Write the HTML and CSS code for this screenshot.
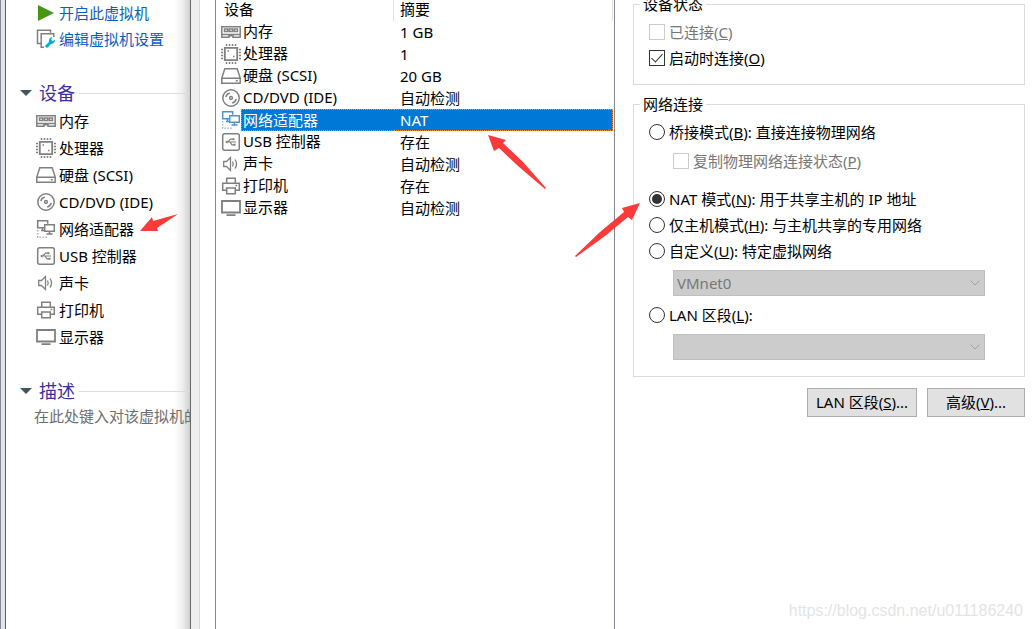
FILE: index.html
```
<!DOCTYPE html>
<html lang="zh-CN">
<head>
    <meta charset="UTF-8">
    <meta name="viewport" content="width=device-width, initial-scale=1.0">
    <title>虚拟机设置</title>
    <link rel="stylesheet" href="styles.css">
</head>
<body>
    <!-- icons -->
    <svg class="sprite">
        <symbol id="memory" viewBox="0 0 20 20">
            <path d="M.8 4.7h18.4v10.6H12v-1.5H8v1.5H.8z M.8 12.5h18.4"/>
            <path d="M3.5 7h3.2v2.5H3.5z M8.4 7h3.2v2.5H8.4z M13.3 7h3.2v2.5h-3.2z"/>
        </symbol>
        <symbol id="cpu" viewBox="0 0 20 20">
            <path d="M3.8 3.8h12.4v12.4H3.8z" stroke-width="1.8"/>
            <path d="M5.5 0v2 M8.5 0v2 M11.5 0v2 M14.5 0v2 M5.5 18v2 M8.5 18v2 M11.5 18v2 M14.5 18v2 M0 5.5h2 M0 8.5h2 M0 11.5h2 M0 14.5h2 M18 5.5h2 M18 8.5h2 M18 11.5h2 M18 14.5h2"/>
            <path d="M6.5 7H8 M12 12.5h1.5"/>
        </symbol>
        <symbol id="disk" viewBox="0 0 20 20">
            <path d="M3.8 2.7h12.4l3 9.3v5.3H.8V12z M.8 12.2h18.4 M14.8 14.8h2"/>
        </symbol>
        <symbol id="cd" viewBox="0 0 20 20">
            <circle cx="10" cy="10" r="8.2"/>
            <circle cx="10" cy="10" r="1.4"/>
            <path d="M4.8 9a5.5 5.5 0 0 1 4-4 M15.2 11a5.5 5.5 0 0 1-4 4"/>
        </symbol>
        <symbol id="network" viewBox="0 0 20 20">
            <path d="M8 8.7H1.7V1.7h10v3 M5 11.5h3.5 M6.500 8.700v2.800"/>
            <path d="M8.7 5.7h9.6v6.6H8.7z M13.5 12.3v2.4 M10.5 15h6"/>
            <path d="M1.7 11v7.3h10" stroke-dasharray="1.5 1.5" stroke-opacity=".6"/>
        </symbol>
        <symbol id="usb" viewBox="0 0 20 20">
            <rect x="1.7" y="1.7" width="16.6" height="16.6" rx="2"/>
            <path d="M5 10h10 M7 10l2.5-2.8H12 M9 10l2 2.8h2" stroke-width="1.2"/>
            <path class="solid" d="M4 10l2.5-1.7v3.4z M11.5 6.2h2v2h-2z M12.5 11.8h2v2h-2z"/>
        </symbol>
        <symbol id="sound" viewBox="0 0 20 20">
            <path d="M2.7 7.5h2.8l4-4v13l-4-4H2.7z M11.5 7.5q1.5 2.5 0 5 M14 5.5q3 4.5 0 9" stroke-width="1.3"/>
        </symbol>
        <symbol id="printer" viewBox="0 0 20 20">
            <path d="M5.7 7V2.2h8.6V7 M5 14.3H1.7V7.2h16.6v7.1H15 M5.7 12h8.6v5.8H5.7z M14.5 9.5h1.8"/>
        </symbol>
        <symbol id="display" viewBox="0 0 20 20">
            <path d="M1 3h18v11.5H1z M5.500 17.200h9" stroke-width="1.8"/>
        </symbol>
    </svg>

    <div class="screen">
        <!-- library window -->
        <aside class="sidebar">
            <a href="#" class="action">
                <svg class="icon" viewBox="0 0 20 20"><path class="play" d="M2 2l16 8-16 8z"/></svg>开启此虚拟机
            </a>
            <a href="#" class="action">
                <svg class="icon" viewBox="0 0 20 20">
                    <path d="M5 14.5H1.5V1.3h13v2.4 M8 18.2H5.2V4.7h12.5V8"/>
                    <path class="wrench" d="M10 18l5-5"/>
                    <path class="wrench-head" d="M16.5 8a4 4 0 0 0-3.5 5.2l1.6 1.6a4 4 0 0 0 4.4-4.4l-2.2 1.8-1.7-1.5z"/>
                </svg>编辑虚拟机设置
            </a>
            <h2 class="section first"><span class="caret"></span>设备</h2>
            <ul class="devices">
                <li><svg class="icon"><use href="#memory"/></svg>内存</li>
                <li><svg class="icon"><use href="#cpu"/></svg>处理器</li>
                <li><svg class="icon"><use href="#disk"/></svg>硬盘 (SCSI)</li>
                <li><svg class="icon"><use href="#cd"/></svg>CD/DVD (IDE)</li>
                <li><svg class="icon"><use href="#network"/></svg>网络适配器</li>
                <li><svg class="icon"><use href="#usb"/></svg>USB 控制器</li>
                <li><svg class="icon"><use href="#sound"/></svg>声卡</li>
                <li><svg class="icon"><use href="#printer"/></svg>打印机</li>
                <li><svg class="icon"><use href="#display"/></svg>显示器</li>
            </ul>
            <h2 class="section"><span class="caret"></span>描述</h2>
            <p class="note">在此处键入对该虚拟机的</p>
        </aside>

        <!-- settings window -->
        <main class="dialog">
            <div class="list">
                <table class="hardware">
                    <thead>
                        <tr><th class="name">设备</th><th>摘要</th></tr>
                    </thead>
                    <tbody>
                        <tr><td><div class="device"><svg class="icon"><use href="#memory"/></svg><span>内存</span></div></td><td>1 GB</td></tr>
                        <tr><td><div class="device"><svg class="icon"><use href="#cpu"/></svg><span>处理器</span></div></td><td>1</td></tr>
                        <tr><td><div class="device"><svg class="icon"><use href="#disk"/></svg><span>硬盘 (SCSI)</span></div></td><td>20 GB</td></tr>
                        <tr><td><div class="device"><svg class="icon"><use href="#cd"/></svg><span>CD/DVD (IDE)</span></div></td><td>自动检测</td></tr>
                        <tr class="selected"><td><div class="device"><svg class="icon"><use href="#network"/></svg><span>网络适配器</span></div></td><td>NAT</td></tr>
                        <tr><td><div class="device"><svg class="icon"><use href="#usb"/></svg><span>USB 控制器</span></div></td><td>存在</td></tr>
                        <tr><td><div class="device"><svg class="icon"><use href="#sound"/></svg><span>声卡</span></div></td><td>自动检测</td></tr>
                        <tr><td><div class="device"><svg class="icon"><use href="#printer"/></svg><span>打印机</span></div></td><td>存在</td></tr>
                        <tr><td><div class="device"><svg class="icon"><use href="#display"/></svg><span>显示器</span></div></td><td>自动检测</td></tr>
                    </tbody>
                </table>
            </div>
            <form class="options">
                <fieldset class="status">
                    <legend>设备状态</legend>
                    <label class="off"><input type="checkbox" disabled><span>已连接(<u>C</u>)</span></label>
                    <label><input type="checkbox" checked><span>启动时连接(<u>O</u>)</span></label>
                </fieldset>
                <fieldset class="connection">
                    <legend>网络连接</legend>
                    <label><input type="radio" name="net"><span>桥接模式(<u>B</u>): 直接连接物理网络</span></label>
                    <label class="off sub"><input type="checkbox" disabled><span>复制物理网络连接状态(<u>P</u>)</span></label>
                    <label><input type="radio" name="net" checked><span>NAT 模式(<u>N</u>): 用于共享主机的 IP 地址</span></label>
                    <label><input type="radio" name="net"><span>仅主机模式(<u>H</u>): 与主机共享的专用网络</span></label>
                    <label><input type="radio" name="net"><span>自定义(<u>U</u>): 特定虚拟网络</span></label>
                    <div class="select">
                        <select aria-label="虚拟网络" disabled><option>VMnet0</option></select>
                        <svg class="arrow" viewBox="0 0 10 6"><path d="M.5 .5L5 5L9.5 .5"/></svg>
                    </div>
                    <label><input type="radio" name="net"><span>LAN 区段(<u>L</u>):</span></label>
                    <div class="select">
                        <select aria-label="LAN 区段" disabled><option></option></select>
                        <svg class="arrow" viewBox="0 0 10 6"><path d="M.5 .5L5 5L9.5 .5"/></svg>
                    </div>
                </fieldset>
                <div class="buttons">
                    <button type="button" class="lan">LAN 区段(<u>S</u>)...</button>
                    <button type="button">高级(<u>V</u>)...</button>
                </div>
            </form>
        </main>

        <!-- red arrows over the windows -->
        <svg class="marks" width="700" height="300">
            <path d="M140 231L152 217L153 221L178 214L157 228L158 231Z"/>
            <path d="M488 135L506 140L503 143L523 162L546 188L545 189L518 166L499 148L494 151Z"/>
            <path d="M640 203L622 208L624 212L600 232L575 256L576 257L605 236L628 217L632 220Z"/>
        </svg>
        <div class="watermark">https://blog.csdn.net/u011186240</div>
    </div>
</body>
</html>
```
FILE: styles.css
```
*{
    box-sizing: border-box;
}
body{
    margin: 0;
    background: #fff;
    color: #000;
    font: 15px/22px "Noto Sans", "Noto Sans CJK SC", sans-serif;
}
.sprite{
    display: none;
}
.screen{
    display: flex;
    position: relative;
    height: 100vh;
    overflow: hidden;
}
.icon{
    width: 20px;
    height: 20px;
    flex: none;
    fill: none;
    stroke: #808080;
    stroke-width: 1.5;
}
.solid{
    fill: #808080;
    stroke: none;
}

/* sidebar */
.sidebar{
    width: 191px;
    flex: none;
    border-left: 1px solid #858a9b;
    border-right: 1px solid #666;
    background: linear-gradient(to right, #e3e3e8 4px, #5c5c66 4px, #5c5c66 5px, #fff 5px, #fff calc(100% - 16px), #f0f0f0 calc(100% - 8px), #d0d0d0);
    overflow: hidden;
    white-space: nowrap;
}
.action{
    display: flex;
    align-items: center;
    gap: 3px;
    height: 26px;
    padding-left: 35px;
    color: #0a5dc2;
    text-decoration: none;
}
.play{
    fill: #46960f;
    stroke: none;
}
.wrench{
    stroke: #00afd0;
    stroke-width: 3;
}
.wrench-head{
    fill: #00afd0;
    stroke: none;
}
.section{
    display: flex;
    align-items: center;
    margin: 27px 0 0;
    padding-left: 19px;
    height: 28px;
    font-size: 18px;
    font-weight: normal;
    color: #3a2ea0;
}
.section::after{
    content: "";
    flex: 1;
    height: 1px;
    margin-left: 4px;
    background: #ddd;
}
.caret{
    margin-right: 7px;
    border: 6px solid transparent;
    border-top-color: #435560;
    border-bottom: 0;
}
.devices{
    list-style: none;
    margin: 0;
    padding: 0 0 0 35px;
}
.devices li{
    display: flex;
    align-items: center;
    gap: 3px;
    height: 27px;
}
.note{
    margin: 0;
    padding-left: 33px;
    color: #6d6d6d;
}

/* hardware table */
.dialog{
    display: flex;
    flex: 1;
    border-left: 8px solid #eee;
}
.list{
    display: flex;
    width: 416px;
    flex: none;
    border-left: 1px solid #d9d9d9;
    border-right: 1px solid #828790;
    padding: 0 1px 0 15px;
}
.list::before{
    content: "";
    width: 1px;
    flex: none;
    background: #828790;
}
.hardware{
    width: 100%;
    height: max-content;
    border-spacing: 0;
    table-layout: fixed;
}
.hardware th, .hardware td{
    padding: 0 0 0 6px;
    height: 22px;
    line-height: 20px;
    text-align: left;
    font-weight: normal;
}
.hardware th{
    height: 21px;
    line-height: 18px;
    vertical-align: top;
    border-right: 1px solid #e0e0e0;
}
.hardware .name{
    width: 178px;
    padding-left: 8px;
}
.hardware td:first-child{
    padding-left: 5px;
}
.device{
    display: flex;
    align-items: center;
}
.device span{
    flex: 1;
    height: 22px;
    padding: 0 0 2px 2px;
}
.selected{
    color: #fff;
}
.selected .icon{
    stroke: #4f94cf;
}
.selected span, .selected td:last-child{
    background: #0078d7;
    border: 1px dotted #ff8728;
}
.selected span{
    padding: 0 0 0 1px;
    border-right: 0;
}
.selected td:last-child{
    border-left: 0;
}

/* options */
.options{
    flex: 1;
    padding: 0 7px 0 18px;
}
fieldset{
    min-width: 0;
    margin: 0;
    border: 1px solid #dcdcdc;
}
.status{
    margin-top: -7px;
    padding: 4px 0 13px 6px;
}
.connection{
    margin-top: 8px;
    padding: 4px 0 10px 6px;
}
legend{
    padding: 0 3px;
}
label{
    display: flex;
    align-items: center;
    gap: 4px;
    height: 26px;
    margin-left: 9px;
}
.off{
    color: #777;
}
.sub{
    margin: 3px 0 12px 33px;
}
input{
    appearance: none;
    display: grid;
    place-items: center;
    flex: none;
    width: 16px;
    height: 16px;
    margin: 0;
    border: 1px solid #333;
    background: #fff;
}
input:disabled{
    border-color: #ccc;
}
input[type="radio"]{
    border-radius: 50%;
}
input[type="radio"]:checked::before{
    content: "";
    width: 10px;
    height: 10px;
    border-radius: 50%;
    background: #333;
}
input[type="checkbox"]:checked::before{
    content: "";
    width: 5px;
    height: 10px;
    margin-bottom: 3px;
    border: solid #333;
    border-width: 0 1px 1px 0;
    transform: rotate(42deg);
}
.select{
    display: grid;
    align-items: center;
    margin: 6px 39px 6px 33px;
}
.select select, .arrow{
    grid-area: 1 / 1;
}
.select select{
    appearance: none;
    width: 100%;
    height: 26px;
    padding: 0 3px;
    border: 1px solid #bfbfbf;
    border-radius: 0;
    background: #ccc;
    color: #777;
    font: inherit;
    opacity: 1;
}
.arrow{
    justify-self: end;
    width: 10px;
    height: 6px;
    margin-right: 5px;
    fill: none;
    stroke: #a0a0a0;
    pointer-events: none;
}
.buttons{
    display: flex;
    justify-content: flex-end;
    gap: 10px;
    margin-top: 11px;
}
button{
    width: 98px;
    height: 29px;
    padding: 0 0 2px;
    border: 1px solid #adadad;
    background: #e1e1e1;
    color: #000;
    font: inherit;
}
.lan{
    width: 110px;
}

/* overlays */
.marks{
    position: absolute;
    left: 0;
    top: 0;
    fill: #fb3a3a;
    pointer-events: none;
}
.watermark{
    position: absolute;
    right: 9px;
    bottom: 7px;
    color: #e4e4e4;
    font-family: "Liberation Sans", sans-serif;
    font-size: 16px;
}
```
